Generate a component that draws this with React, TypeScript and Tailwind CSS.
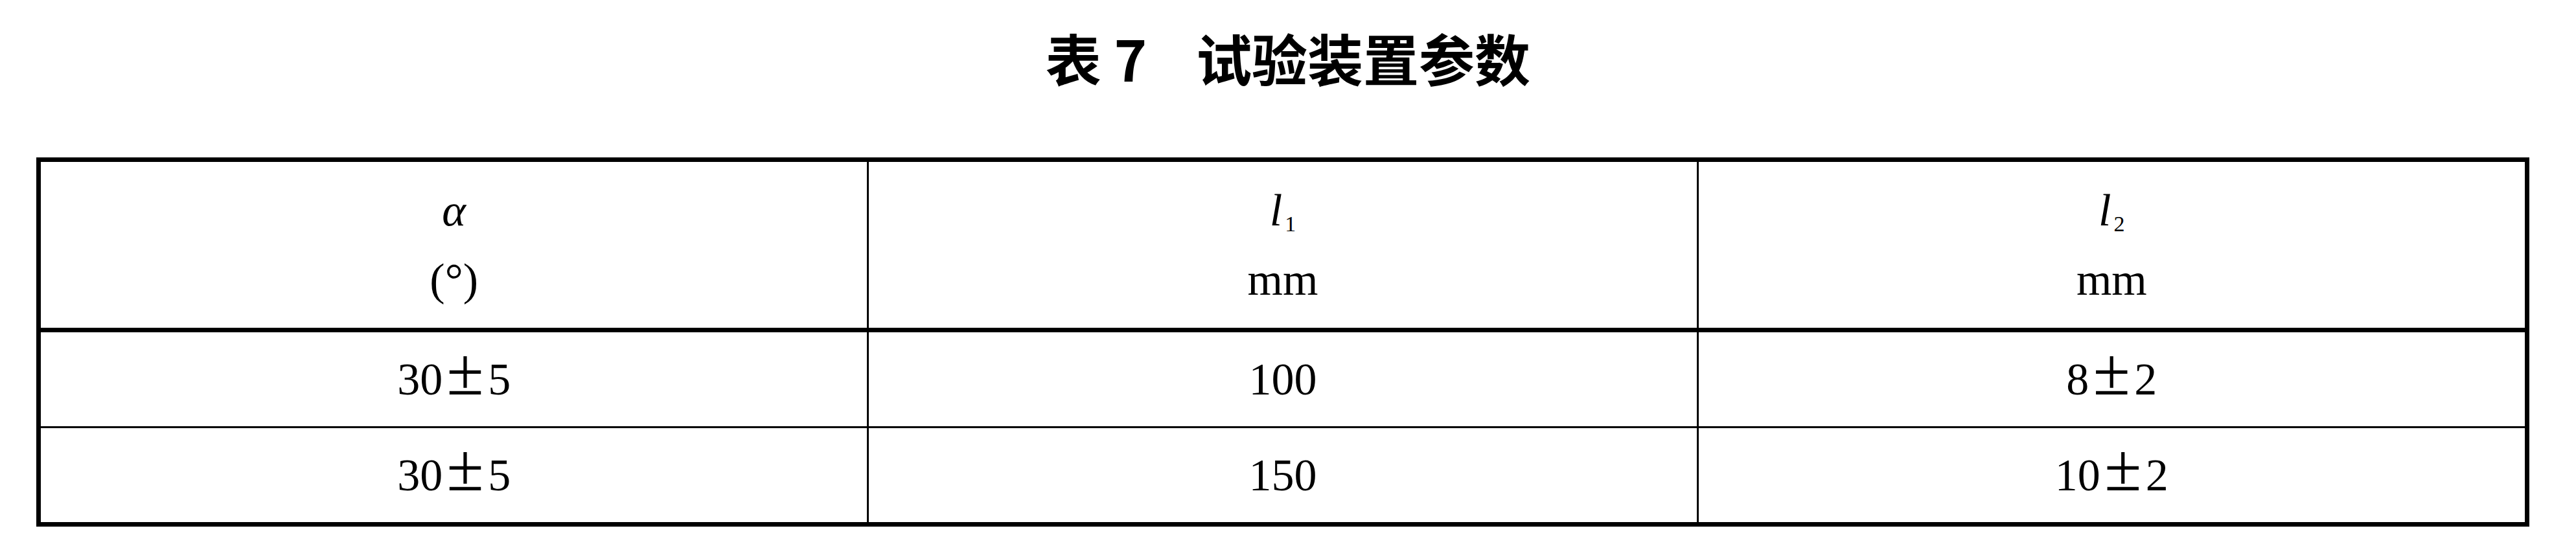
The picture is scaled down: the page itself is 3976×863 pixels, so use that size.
import React from "react";

const serif = "font-['Liberation_Serif','Noto_Sans_CJK_SC',serif]";

type Row = [string, string, string];

const rows: Row[] = [
  ["30±5", "100", "8±2"],
  ["30±5", "150", "10±2"],
];

// the ± in the original is a full-width glyph, so give it a 1em box
function Value({ text }: { text: string }) {
  const parts = text.split("±");
  if (parts.length === 1) return <>{text}</>;
  return (
    <>
      {parts[0]}
      <span className="inline-block w-[70px] text-center text-[104px] leading-[48px]">±</span>
      {parts[1]}
    </>
  );
}

function HeaderCell({ top, unit }: { top: React.ReactNode; unit: string }) {
  return (
    <th className="border-x-[3px] border-b-[7px] border-black font-normal align-middle">
      <div className="flex flex-col items-center gap-[37px] text-[70px] leading-none">
        <div className="h-[70px] flex items-end">{top}</div>
        <div className="h-[70px] flex items-end">{unit}</div>
      </div>
    </th>
  );
}

function Sym({ letter, sub }: { letter: string; sub?: string }) {
  return (
    <span className="inline-flex items-baseline">
      <i>{letter}</i>
      {sub && <span className="text-[34px] relative top-[9px] ml-[4px]">{sub}</span>}
    </span>
  );
}

export default function App() {
  return (
    <div className="w-[3976px] h-[863px] bg-white text-black overflow-hidden">
      <h1 className="pt-[46px] flex justify-center font-['Noto_Sans_CJK_SC',sans-serif] font-bold text-[86px] leading-none">
        <span>表 7</span>
        <span className="ml-[76px]">试验装置参数</span>
      </h1>

      <table
        className={`mt-[111px] ml-[56px] w-[3848px] table-fixed border-collapse border-[7px] border-black ${serif}`}
      >
        <thead>
          <tr className="h-[263px]">
            <HeaderCell top={<Sym letter="α" />} unit="(°)" />
            <HeaderCell top={<Sym letter="l" sub="1" />} unit="mm" />
            <HeaderCell top={<Sym letter="l" sub="2" />} unit="mm" />
          </tr>
        </thead>
        <tbody>
          {rows.map((r, i) => (
            <tr key={i} className="h-[150px]">
              {r.map((c, j) => (
                <td
                  key={j}
                  className="border-[3px] border-black text-center align-middle text-[70px] leading-none"
                >
                  <Value text={c} />
                </td>
              ))}
            </tr>
          ))}
        </tbody>
      </table>
    </div>
  );
}
